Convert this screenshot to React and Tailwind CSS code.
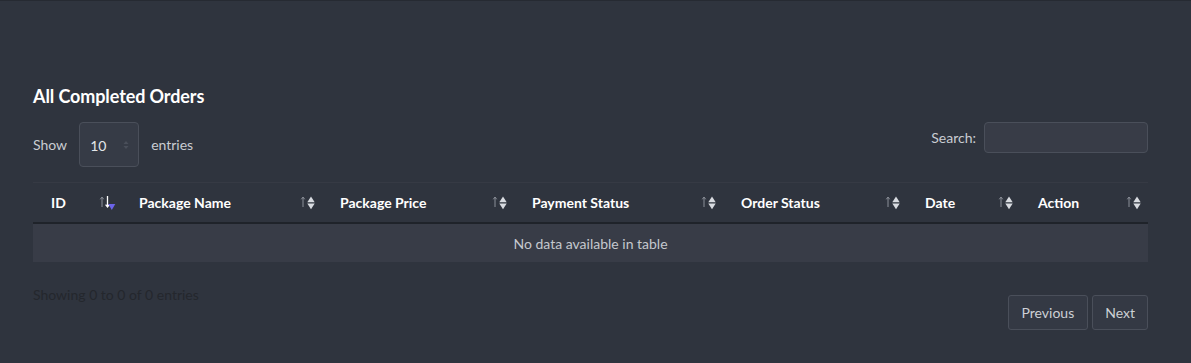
import React from 'react';

const columns = [
  { label: 'ID', width: 'w-[88px]', active: true },
  { label: 'Package Name', width: 'w-[201px]' },
  { label: 'Package Price', width: 'w-[192px]' },
  { label: 'Payment Status', width: 'w-[209px]' },
  { label: 'Order Status', width: 'w-[184px]' },
  { label: 'Date', width: 'w-[113px]' },
  { label: 'Action', width: 'flex-1' },
];

function SortIcon({ active }) {
  if (active) {
    return (
      <svg width="18" height="18" viewBox="0 0 18 18" className="shrink-0">
        <path d="M3 13V3.5M1.3 5.3L3 3L4.7 5.3" stroke="#8b8f98" strokeWidth="1" fill="none" />
        <path d="M8.5 2V12.5M6.6 10.6L8.5 12.9L10.4 10.6" stroke="#ffffff" strokeWidth="1.3" fill="none" />
        <path d="M9.3 10H16.3L12.8 16Z" fill="#6b63e8" />
      </svg>
    );
  }
  return (
    <svg width="18" height="18" viewBox="0 0 18 18" className="shrink-0">
      <path d="M3 13V3.5M1.3 5.3L3 3L4.7 5.3" stroke="#8b8f98" strokeWidth="1" fill="none" />
      <path d="M7.3 8.2L11 2.5L14.7 8.2Z" fill="#d8dbe0" />
      <path d="M7.3 9.6L11 15.3L14.7 9.6Z" fill="#d8dbe0" />
    </svg>
  );
}

export default function App() {
  return (
    <div className="min-h-[363px] w-full bg-[#2f343e] border-t border-[#262a32] pt-[81px] pl-[33px] pr-[43px] font-['Lato','Noto_Sans',sans-serif] text-[#d3d6db]">
      <h2 className="text-[18px] font-bold text-white leading-[28px] tracking-[-0.1px]">All Completed Orders</h2>

      <div className="flex items-start justify-between mt-[12px]">
        <div className="flex items-center text-[14px] text-[#c9ccd2]">
          <span>Show</span>
          <div className="ml-[12px] mr-[12px] w-[60px] h-[45px] rounded-[4px] border border-[#4a4f5a] bg-[#363b46] flex items-center justify-between pl-[10px] pr-[9px]">
            <span className="text-[14px] text-[#e4e6ea] mt-[2px]">10</span>
            <svg width="6" height="10" viewBox="0 0 6 10">
              <path d="M0.5 4L3 1L5.5 4Z" fill="#4a4f5a" />
              <path d="M0.5 6L3 9L5.5 6Z" fill="#4a4f5a" />
            </svg>
          </div>
          <span>entries</span>
        </div>
        <div className="flex items-center text-[14px] text-[#c9ccd2]">
          <span className="mr-[8px]">Search:</span>
          <div className="w-[164px] h-[31px] rounded-[4px] border border-[#4a4f5a] bg-[#383c47]" />
        </div>
      </div>

      <div className="mt-[15px] border-t border-[#363a44]">
        <div className="flex h-[41px] border-b-2 border-[#1f232a]">
          {columns.map((c) => (
            <div key={c.label} className={`${c.width} flex items-center justify-between pl-[18px] pr-[4px]`}>
              <span className="text-[14px] font-bold text-white">{c.label}</span>
              <SortIcon active={c.active} />
            </div>
          ))}
        </div>
        <div className="h-[38px] bg-[#383c47] flex items-center justify-center text-[14px] text-[#c5c8ce]">
          No data available in table
        </div>
      </div>

      <div className="flex items-start justify-between mt-[22px] pb-[33px]">
        <div className="text-[14px] text-[#24272d]">Showing 0 to 0 of 0 entries</div>
        <div className="flex gap-[4px] mt-[11px]">
          <div className="h-[35px] px-[13px] flex items-center rounded-[3px] border border-[#4a4f5a] bg-[#343944] text-[14px] text-[#cdd0d5]">Previous</div>
          <div className="h-[35px] px-[12px] flex items-center rounded-[3px] border border-[#4a4f5a] bg-[#343944] text-[14px] text-[#cdd0d5]">Next</div>
        </div>
      </div>
    </div>
  );
}
